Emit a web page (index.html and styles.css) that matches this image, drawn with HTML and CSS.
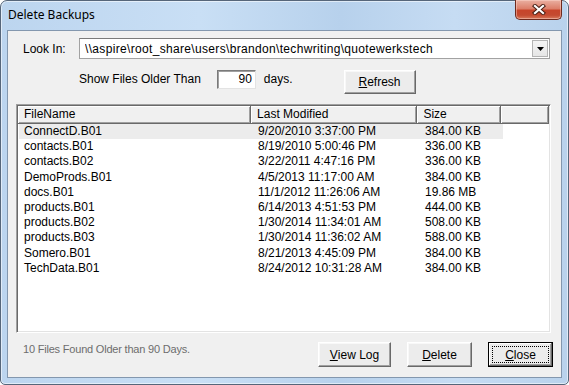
FILE: index.html
```html
<!DOCTYPE html>
<html>
<head>
<meta charset="utf-8">
<link rel="stylesheet" href="styles.css">
</head>
<body>
<div class="window">
  <div class="titlebar">
    <span class="title">Delete Backups</span>
    <div class="close-btn">
      <svg width="14" height="11" viewBox="0 0 14 11">
        <path d="M3 2 L11 9 M11 2 L3 9" stroke="#4a2016" stroke-width="4.2" stroke-linecap="square" fill="none"/>
        <path d="M3 2 L11 9 M11 2 L3 9" stroke="#ffffff" stroke-width="2.2" stroke-linecap="square" fill="none"/>
      </svg>
    </div>
  </div>
  <div class="client">
    <div class="lookin-row">
      <span class="lookin-label">Look In:</span>
      <div class="combo">
        <span class="combo-text">\\aspire\root_share\users\brandon\techwriting\quotewerkstech</span>
        <span class="combo-btn">
          <svg width="7" height="4" viewBox="0 0 7 4"><path d="M0 0 H7 L3.5 4 Z" fill="#000"/></svg>
        </span>
      </div>
    </div>
    <div class="older-row">
      <span class="older-label">Show Files Older Than</span>
      <span class="days-input">90</span>
      <span class="days-label">days.</span>
      <button class="btn refresh-btn"><u>R</u>efresh</button>
    </div>
    <div class="list">
      <div class="list-head">
        <div class="hcell col-name">FileName</div>
        <div class="hcell col-date">Last Modified</div>
        <div class="hcell col-size">Size</div>
        <div class="hcell col-rest"></div>
      </div>
      <div class="list-body">
        <div class="lrow selected"><span class="col-name">ConnectD.B01</span><span class="col-date">9/20/2010 3:37:00 PM</span><span class="col-size">384.00 KB</span></div>
        <div class="lrow"><span class="col-name">contacts.B01</span><span class="col-date">8/19/2010 5:00:46 PM</span><span class="col-size">336.00 KB</span></div>
        <div class="lrow"><span class="col-name">contacts.B02</span><span class="col-date">3/22/2011 4:47:16 PM</span><span class="col-size">336.00 KB</span></div>
        <div class="lrow"><span class="col-name">DemoProds.B01</span><span class="col-date">4/5/2013 11:17:00 AM</span><span class="col-size">384.00 KB</span></div>
        <div class="lrow"><span class="col-name">docs.B01</span><span class="col-date">11/1/2012 11:26:06 AM</span><span class="col-size">19.86 MB</span></div>
        <div class="lrow"><span class="col-name">products.B01</span><span class="col-date">6/14/2013 4:51:53 PM</span><span class="col-size">444.00 KB</span></div>
        <div class="lrow"><span class="col-name">products.B02</span><span class="col-date">1/30/2014 11:34:01 AM</span><span class="col-size">508.00 KB</span></div>
        <div class="lrow"><span class="col-name">products.B03</span><span class="col-date">1/30/2014 11:36:02 AM</span><span class="col-size">588.00 KB</span></div>
        <div class="lrow"><span class="col-name">Somero.B01</span><span class="col-date">8/21/2013 4:45:09 PM</span><span class="col-size">384.00 KB</span></div>
        <div class="lrow"><span class="col-name">TechData.B01</span><span class="col-date">8/24/2012 10:31:28 AM</span><span class="col-size">384.00 KB</span></div>
      </div>
    </div>
    <div class="footer">
      <span class="status">10 Files Found Older than 90 Days.</span>
      <div class="footer-buttons">
        <button class="btn viewlog-btn"><u>V</u>iew Log</button>
        <button class="btn delete-btn"><u>D</u>elete</button>
        <button class="btn close-action default"><span class="focus"><u>C</u>lose</span></button>
      </div>
    </div>
  </div>
</div>
</body>
</html>
```

FILE: styles.css
```css
html, body {
  margin: 0;
  padding: 0;
  background: #ffffff;
}

body {
  width: 569px;
  height: 385px;
  overflow: hidden;
  font-family: "Liberation Sans", Arial, sans-serif;
  font-size: 12px;
  color: #000;
}

.window {
  box-sizing: border-box;
  width: 569px;
  height: 385px;
  border: 1px solid #56667a;
  border-radius: 7px 7px 5px 5px;
  background: linear-gradient(to right, #bcd5ef 0%, #c9dff5 35%, #b7d1ec 60%, #c6dcf3 80%, #b9d2ec 100%);
  box-shadow: inset 0 0 0 1px rgba(255, 255, 255, 0.55);
  display: flex;
  flex-direction: column;
}

.titlebar {
  height: 29px;
  display: flex;
  align-items: flex-start;
  flex-shrink: 0;
}

.title {
  font-family: "Noto Sans", "Liberation Sans", sans-serif;
  font-size: 12px;
  color: #000;
  margin-left: 7px;
  margin-top: 6px;
  line-height: 16px;
}

.close-btn {
  margin-left: auto;
  margin-right: 6px;
  margin-top: -1px;
  width: 47px;
  height: 20px;
  box-sizing: border-box;
  border: 1px solid #6e2a1e;
  border-top: none;
  border-radius: 0 0 5px 5px;
  background: linear-gradient(to bottom, #eab0a2 0%, #dc7f6a 45%, #c7452b 55%, #c44a30 80%, #d87a5c 100%);
  box-shadow: inset 0 0 0 1px rgba(255, 220, 210, 0.45);
  display: flex;
  align-items: center;
  justify-content: center;
}

.client {
  flex: 1;
  margin: 0 6px 6px 6px;
  border: 1px solid #8397ae;
  background: #f0f0f0;
  padding: 7px 8px 0 8px;
  display: flex;
  flex-direction: column;
}

.lookin-row {
  display: flex;
  align-items: center;
  height: 21px;
}

.lookin-label {
  width: 63px;
  padding-left: 7px;
  box-sizing: border-box;
  flex-shrink: 0;
}

.combo {
  box-sizing: border-box;
  width: 471px;
  height: 21px;
  border: 1px solid #a2a2a2;
  border-top-color: #7a7a7a;
  background: #fff;
  display: flex;
  align-items: center;
  padding: 0 1px 0 5px;
}

.combo-text {
  flex: 1;
  white-space: nowrap;
  overflow: hidden;
  letter-spacing: 0.33px;
}

.combo-btn {
  box-sizing: border-box;
  width: 16px;
  height: 17px;
  border: 1px solid #b4b4b4;
  background: linear-gradient(to bottom, #f4f4f4, #e6e6e6);
  display: flex;
  align-items: center;
  justify-content: center;
}

.older-row {
  display: flex;
  align-items: flex-start;
  height: 24px;
  margin-top: 11px;
  padding-left: 63px;
}

.older-label {
  line-height: 18px;
}

.days-input {
  box-sizing: border-box;
  width: 39px;
  height: 19px;
  margin-left: 16px;
  background: #fff;
  border: 1px solid;
  border-color: #7a7a7a #e3e3e3 #e3e3e3 #7a7a7a;
  box-shadow: inset 1px 1px 0 #a0a0a0;
  text-align: right;
  padding-right: 3px;
  line-height: 17px;
}

.days-label {
  margin-left: 8px;
  line-height: 18px;
}

.btn {
  box-sizing: border-box;
  height: 25px;
  font-family: "Liberation Sans", Arial, sans-serif;
  font-size: 12px;
  color: #000;
  background: #ececec;
  border: 1px solid;
  border-color: #ffffff #696969 #696969 #ffffff;
  box-shadow: inset -1px -1px 0 #a0a0a0, inset 1px 1px 0 #f8f8f8;
  padding: 0;
  margin: 0;
  display: flex;
  align-items: center;
  justify-content: center;
}

.btn u {
  text-decoration: underline;
  text-underline-offset: 1px;
}

.refresh-btn {
  width: 72px;
  height: 24px;
  margin-left: 51px;
}

.list {
  box-sizing: border-box;
  margin-top: 10px;
  width: 535px;
  height: 229px;
  border: 1px solid;
  border-color: #a0a0a0 #ffffff #ffffff #a0a0a0;
  box-shadow: inset 1px 1px 0 #696969, inset -1px -1px 0 #e3e3e3;
  background: #fff;
  padding: 1px;
  display: flex;
  flex-direction: column;
}

.list-head {
  display: flex;
  height: 18px;
  flex-shrink: 0;
}

.hcell {
  box-sizing: border-box;
  height: 18px;
  background: #f0f0f0;
  border-right: 1px solid #696969;
  border-bottom: 1px solid #696969;
  box-shadow: inset 1px 1px 0 #ffffff, inset -1px -1px 0 #a0a0a0;
  padding-left: 6px;
  line-height: 17px;
  white-space: nowrap;
}

.list-head .col-name { width: 234px; }
.list-head .col-date { width: 167px; }
.list-head .col-size { width: 84px; }
.list-head .col-rest { width: 48px; }

.list-body {
  padding-top: 0;
}

.lrow {
  display: flex;
  height: 15.2px;
  line-height: 15px;
  width: 484px;
  margin-left: 1px;
  white-space: nowrap;
}

.lrow.selected {
  background: #ececec;
}

.lrow .col-name { width: 233px; padding-left: 5px; box-sizing: border-box; }
.lrow .col-date { width: 167px; padding-left: 6px; box-sizing: border-box; }
.lrow .col-size { width: 84px; padding-left: 6px; box-sizing: border-box; }

.footer {
  display: flex;
  align-items: flex-start;
  margin-top: 9px;
  height: 25px;
}

.status {
  font-size: 11px;
  letter-spacing: -0.2px;
  color: #6d6d6d;
  padding-left: 7px;
  line-height: 14px;
  margin-top: 0;
}

.footer-buttons {
  margin-left: auto;
  display: flex;
  gap: 16px;
}

.viewlog-btn { width: 73px; }
.delete-btn { width: 65px; }

.close-action {
  width: 65px;
  border: 1px solid #000;
  box-shadow: inset -1px -1px 0 #696969, inset 1px 1px 0 #ffffff, inset -2px -2px 0 #a0a0a0;
}

.focus {
  box-sizing: border-box;
  width: 57px;
  height: 17px;
  border: 1px dotted #000;
  display: flex;
  align-items: center;
  justify-content: center;
}
```
